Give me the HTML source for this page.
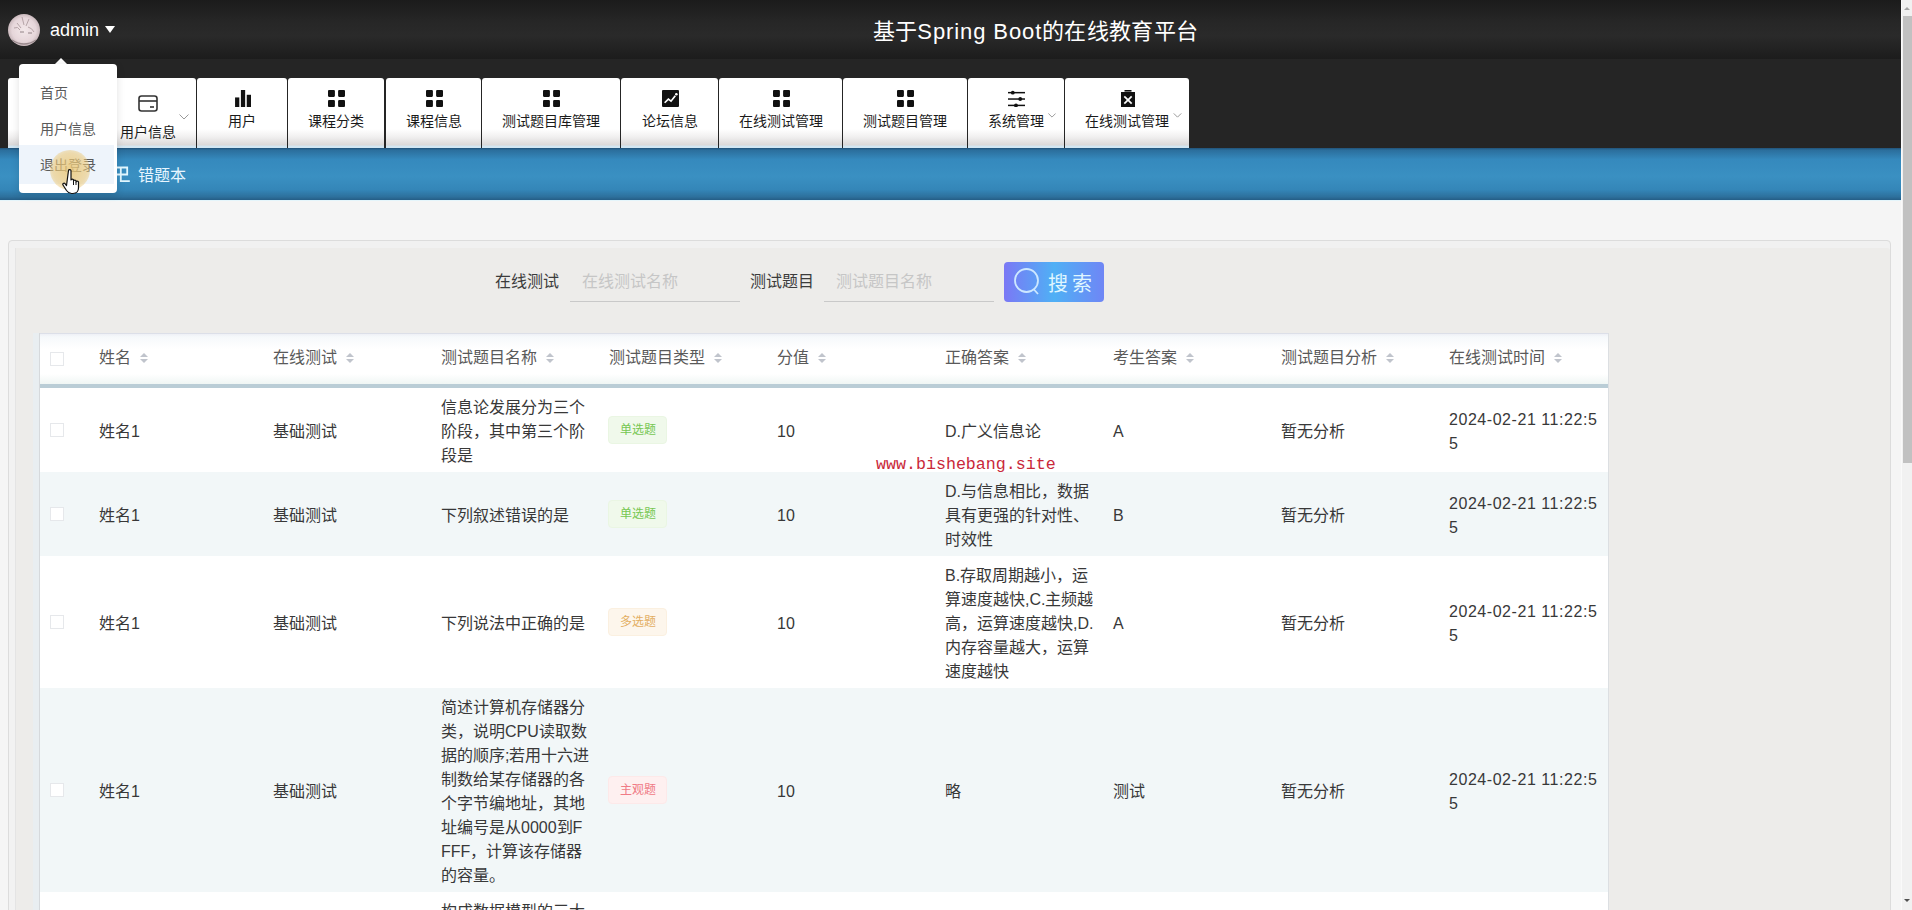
<!DOCTYPE html>
<html lang="zh-CN"><head><meta charset="utf-8">
<style>
*{box-sizing:border-box;margin:0;padding:0}
html,body{width:1912px;height:910px;overflow:hidden}
body{background:#f5f5f5;font-family:"Liberation Sans",sans-serif;position:relative;color:#333}
.abs{position:absolute}
#topbar{left:0;top:0;width:1901px;height:59px;background:linear-gradient(#1b1b1b 0%,#262626 35%,#2a2a2a 60%,#1c1c1c 100%)}
#navbg{left:0;top:59px;width:1901px;height:89px;background:#252525}
#bluebar{left:0;top:148px;width:1901px;height:52px;background:linear-gradient(#215278 0%,#2b6e9c 4%,#3589bd 22%,#3a90c2 55%,#3486b8 80%,#2d709c 94%,#255d85 100%)}
#scroll{left:1901px;top:0;width:11px;height:910px;background:#f1f1f1;border-left:1px solid #fafafa}
#thumb{left:1903px;top:16px;width:9px;height:447px;background:#c1c1c1}
.tab{position:absolute;top:78px;height:70px;background:linear-gradient(#fff 0%,#fff 73%,#f1f0f0 84%,#dad8d8 96%,#d2e6f2 97%,#d2e6f2 100%);border-radius:3px 3px 0 0;text-align:center;color:#1a1a1a;font-size:14px}
.tab .ic{position:absolute;top:12px;left:50%;margin-left:-8px;width:17px;height:17px}
.tab .tx{position:absolute;top:35px;left:0;right:0;line-height:16px;white-space:nowrap}
.chev{position:absolute;width:10px;height:6px}
#title{left:0;width:1901px;top:17px;text-align:center;color:#fff;font-size:22px;letter-spacing:0.3px;line-height:30px;padding-left:170px}
#avatar{left:8px;top:14px;width:32px;height:32px;border-radius:50%;background:radial-gradient(circle at 45% 45%,#f3e6e9 0%,#e2cdd2 50%,#b9a2a8 100%)}
#admin{left:50px;top:19px;color:#fff;font-size:18px;line-height:22px}
#caret{left:105px;top:26px;width:0;height:0;border-left:5.5px solid transparent;border-right:5.5px solid transparent;border-top:7px solid #fff}
#crumb{left:138px;top:166px;color:#e8f6ff;font-size:16px;line-height:20px}
#box{left:8px;top:240px;width:1883px;height:700px;background:#edecea;border:1px solid #dcdcdc;border-radius:4px;box-shadow:inset 0 7px 0 #f1f1f1,inset 6px 0 0 #f2f2f2,inset 7px 0 0 #e4e4e4}
.lbl{position:absolute;top:272px;font-size:16px;line-height:20px;color:#3c3c3c}
.inp{position:absolute;top:262px;height:40px;border-bottom:1px solid #c9c9c9;color:#c6c6c6;font-size:16px;line-height:40px;padding-left:12px}
#sbtn{left:1004px;top:262px;width:100px;height:40px;border-radius:4px;background:linear-gradient(90deg,#7b78f5 0%,#4fb0f5 50%,#6f86f5 100%);color:#dff6ff;font-size:20px;line-height:40px}
#table{left:40px;top:333px;width:1568px;height:620px;background:#fff;box-shadow:1px 0 0 #dcdfe2,-1px 0 0 #d6d9dc,-7px 0 0 #e9eef1}
#thead{left:0;top:0;width:1568px;height:55px;background:linear-gradient(#eef0f6 0px,#f6f9fb 3px,#fff 15px,#fff 40px,#eef5f3 51px);border-top:1px solid #dcdfe8;border-bottom:4px solid #bacdd6}
.th{position:absolute;top:14px;font-size:16px;line-height:20px;color:#5a5a5a;white-space:nowrap}
.sort{display:inline-block;width:8px;height:11px;margin-left:9px;vertical-align:-1px;position:relative}
.sort:before{content:"";position:absolute;left:0;top:0;border-left:4px solid transparent;border-right:4px solid transparent;border-bottom:4px solid #c0c4cc}
.sort:after{content:"";position:absolute;left:0;top:6px;border-left:4px solid transparent;border-right:4px solid transparent;border-top:4px solid #c0c4cc}
.row{position:absolute;left:0;width:1568px}
.cb{border-color:#e6e8eb!important;border-radius:0!important}
.cell{position:absolute;font-size:16px;line-height:24px;color:#383838;white-space:nowrap;margin-top:1.5px}
.cb{position:absolute;left:10px;width:14px;height:14px;border:1px solid #dcdfe6;border-radius:2px;background:#fff}
.tag{position:absolute;left:568px;width:59px;height:28px;border-radius:4px;font-size:12px;line-height:26px;text-align:center;border:1px solid}
.green{background:#f0f9eb;border-color:#eaf6e3;color:#76c752}
.orange{background:#fdf6ec;border-color:#fbf0e0;color:#e3ae62}
.red{background:#fef0f0;border-color:#fde9e9;color:#f07b86}
#dd{left:19px;top:64px;width:98px;height:129px;background:#fff;border-radius:4px;box-shadow:0 2px 8px rgba(0,0,0,.12)}
#dd .it{position:absolute;left:21px;margin-top:1px;font-size:14px;line-height:18px;color:#5a5a5a}
#ddarr{left:55px;top:58px;width:0;height:0;border-left:6px solid transparent;border-right:6px solid transparent;border-bottom:6px solid #fff}
#wm{left:876px;top:455px;font-family:"Liberation Mono",monospace;font-size:16.65px;line-height:20px;color:#c9283a}
</style></head><body>
<div id="topbar" class="abs"></div>
<div id="navbg" class="abs"></div>
<div id="bluebar" class="abs"></div>
<div class="abs" style="left:0;top:200px;width:1901px;height:1px;background:#e4f5fb"></div>
<div id="scroll" class="abs"></div>
<div id="thumb" class="abs"></div>
<div class="abs" style="left:1904px;top:7px;width:0;height:0;border-left:3.5px solid transparent;border-right:3.5px solid transparent;border-bottom:3.5px solid #a3a3a3"></div>
<div class="abs" style="left:1904px;top:899px;width:0;height:0;border-left:3.5px solid transparent;border-right:3.5px solid transparent;border-top:3.5px solid #505050"></div>
<div id="title" class="abs">基于<span style="letter-spacing:0.9px">Spring Boot</span>的在线教育平台</div>
<svg class="abs" style="left:8px;top:14px" width="32" height="32" viewBox="0 0 32 32"><defs><radialGradient id="ag" cx="50%" cy="50%" r="50%"><stop offset="0" stop-color="#f3e8ea"/><stop offset="0.75" stop-color="#e6d6da"/><stop offset="1" stop-color="#c9b8bc"/></radialGradient><clipPath id="ac"><circle cx="16" cy="16" r="16"/></clipPath></defs><circle cx="16" cy="16" r="16" fill="url(#ag)"/><g clip-path="url(#ac)" fill="none" stroke="#a89599" stroke-width="1" opacity=".8"><path d="M14 3 L16 11 M21 5 L18 12 M9 9 L13 14 M6 14 Q10 12 12 16 M20 13 Q24 14 26 18"/><path d="M12 18 H16 M20 19 H24" stroke="#7d6d71"/><path d="M4 26 Q16 34 28 26" stroke="#8a7a7e" stroke-width="1.5"/></g></svg>
<div id="admin" class="abs">admin</div>
<div id="caret" class="abs"></div>

<!-- tabs -->
<div class="tab" style="left:8px;width:188px">
  <svg class="ic" style="left:130px;margin-left:0;top:17px;width:20px;height:17px" viewBox="0 0 20 17"><rect x="1" y="1" width="18" height="15" rx="2.5" fill="none" stroke="#333" stroke-width="1.6"/><line x1="1" y1="6" x2="19" y2="6" stroke="#333" stroke-width="1.6"/><line x1="12" y1="12" x2="16" y2="12" stroke="#333" stroke-width="1.6"/></svg>
  <div class="tx" style="left:112px;right:auto;top:46px">用户信息</div>
  <svg class="chev" style="left:171px;top:36px" viewBox="0 0 10 6"><polyline points="0.5,0.5 5,5 9.5,0.5" fill="none" stroke="#999" stroke-width="1"/></svg>
</div>
<div class="tab" style="left:197px;width:90px">
  <svg class="ic" viewBox="0 0 16 16" style="top:12px"><rect x="1" y="7" width="4" height="9" fill="#111"/><rect x="6.5" y="0" width="4" height="16" fill="#111"/><rect x="12" y="4.5" width="4" height="11.5" fill="#111"/></svg>
  <div class="tx">用户</div>
</div>
<div class="tab" style="left:288px;width:96px">
  <svg class="ic" viewBox="0 0 16 16"><rect x="0" y="0" width="6.5" height="6.5" rx="1" fill="#111"/><rect x="9.5" y="0" width="6.5" height="6.5" rx="1" fill="#111"/><rect x="0" y="9.5" width="6.5" height="6.5" rx="1" fill="#111"/><rect x="9.5" y="9.5" width="6.5" height="6.5" rx="1" fill="#111"/></svg>
  <div class="tx">课程分类</div>
</div>
<div class="tab" style="left:386px;width:95px">
  <svg class="ic" viewBox="0 0 16 16"><rect x="0" y="0" width="6.5" height="6.5" rx="1" fill="#111"/><rect x="9.5" y="0" width="6.5" height="6.5" rx="1" fill="#111"/><rect x="0" y="9.5" width="6.5" height="6.5" rx="1" fill="#111"/><rect x="9.5" y="9.5" width="6.5" height="6.5" rx="1" fill="#111"/></svg>
  <div class="tx">课程信息</div>
</div>
<div class="tab" style="left:482px;width:138px">
  <svg class="ic" viewBox="0 0 16 16"><rect x="0" y="0" width="6.5" height="6.5" rx="1" fill="#111"/><rect x="9.5" y="0" width="6.5" height="6.5" rx="1" fill="#111"/><rect x="0" y="9.5" width="6.5" height="6.5" rx="1" fill="#111"/><rect x="9.5" y="9.5" width="6.5" height="6.5" rx="1" fill="#111"/></svg>
  <div class="tx">测试题目库管理</div>
</div>
<div class="tab" style="left:621px;width:97px">
  <svg class="ic" viewBox="0 0 16 16"><rect x="0" y="0" width="16" height="16" rx="1" fill="#111"/><polyline points="2.5,12 6,8.5 8.5,10.5 12.5,5.5" fill="none" stroke="#fff" stroke-width="1.6"/><circle cx="13.5" cy="4" r="1.2" fill="#fff"/></svg>
  <div class="tx">论坛信息</div>
</div>
<div class="tab" style="left:719px;width:123px">
  <svg class="ic" viewBox="0 0 16 16"><rect x="0" y="0" width="6.5" height="6.5" rx="1" fill="#111"/><rect x="9.5" y="0" width="6.5" height="6.5" rx="1" fill="#111"/><rect x="0" y="9.5" width="6.5" height="6.5" rx="1" fill="#111"/><rect x="9.5" y="9.5" width="6.5" height="6.5" rx="1" fill="#111"/></svg>
  <div class="tx">在线测试管理</div>
</div>
<div class="tab" style="left:843px;width:124px">
  <svg class="ic" viewBox="0 0 16 16"><rect x="0" y="0" width="6.5" height="6.5" rx="1" fill="#111"/><rect x="9.5" y="0" width="6.5" height="6.5" rx="1" fill="#111"/><rect x="0" y="9.5" width="6.5" height="6.5" rx="1" fill="#111"/><rect x="9.5" y="9.5" width="6.5" height="6.5" rx="1" fill="#111"/></svg>
  <div class="tx">测试题目管理</div>
</div>
<div class="tab" style="left:968px;width:96px">
  <svg class="ic" viewBox="0 0 16 16" style="left:40px;margin-left:0"><line x1="0" y1="2.5" x2="16" y2="2.5" stroke="#111" stroke-width="1.4"/><line x1="0" y1="8.5" x2="16" y2="8.5" stroke="#111" stroke-width="1.4"/><line x1="0" y1="14.5" x2="16" y2="14.5" stroke="#111" stroke-width="1.4"/><circle cx="4.5" cy="2.5" r="1.8" fill="#111"/><circle cx="11.5" cy="8.5" r="1.8" fill="#111"/><circle cx="7.5" cy="14.5" r="1.8" fill="#111"/></svg>
  <div class="tx" style="left:20px;right:auto">系统管理</div>
  <svg class="chev" style="left:80px;top:35px;width:8px;height:5px" viewBox="0 0 10 6"><polyline points="0.5,0.5 5,5 9.5,0.5" fill="none" stroke="#999" stroke-width="1.2"/></svg>
</div>
<div class="tab" style="left:1065px;width:124px">
  <svg class="ic" viewBox="0 0 16 17" style="left:55px;margin-left:0;width:16px;height:17px;top:12px"><rect x="1" y="2" width="14" height="15" fill="#111"/><rect x="4.5" y="0" width="7" height="1.6" fill="#111"/><line x1="4.3" y1="6.3" x2="11.7" y2="13.7" stroke="#fff" stroke-width="1.7"/><line x1="11.7" y1="6.3" x2="4.3" y2="13.7" stroke="#fff" stroke-width="1.7"/></svg>
  <div class="tx" style="left:20px;right:auto">在线测试管理</div>
  <svg class="chev" style="left:108px;top:35px;width:9px;height:5px" viewBox="0 0 10 6"><polyline points="0.5,0.5 5,5 9.5,0.5" fill="none" stroke="#999" stroke-width="1.2"/></svg>
</div>

<div id="crumb" class="abs">错题本</div>
<svg class="abs" style="left:110px;top:160px" width="24" height="26" viewBox="110 160 24 26"><path d="M112 167.5 H127.2 V174.5 H112 M120.8 167 V181.2 H129.8" fill="none" stroke="#e2f8ff" stroke-width="1.8"/></svg>

<div id="box" class="abs"></div>
<div class="lbl" style="left:495px">在线测试</div>
<div class="inp" style="left:570px;width:170px">在线测试名称</div>
<div class="lbl" style="left:750px">测试题目</div>
<div class="inp" style="left:824px;width:170px">测试题目名称</div>
<div id="sbtn" class="abs">
  <svg style="position:absolute;left:8px;top:5px" width="30" height="30" viewBox="0 0 30 30"><circle cx="14.5" cy="13.5" r="11.5" fill="none" stroke="#cde8ff" stroke-width="1.8"/><line x1="21.5" y1="22" x2="26" y2="27" stroke="#cde8ff" stroke-width="1.8"/></svg>
  <span style="position:absolute;left:44px;top:2px;letter-spacing:4px">搜索</span>
</div>

<div id="table" class="abs">
  <div id="thead" class="abs">
    <div class="cb" style="top:18px;border-color:#e4e7ed"></div>
    <div class="th" style="left:59px">姓名<i class="sort"></i></div>
    <div class="th" style="left:233px">在线测试<i class="sort"></i></div>
    <div class="th" style="left:401px">测试题目名称<i class="sort"></i></div>
    <div class="th" style="left:569px">测试题目类型<i class="sort"></i></div>
    <div class="th" style="left:737px">分值<i class="sort"></i></div>
    <div class="th" style="left:905px">正确答案<i class="sort"></i></div>
    <div class="th" style="left:1073px">考生答案<i class="sort"></i></div>
    <div class="th" style="left:1241px">测试题目分析<i class="sort"></i></div>
    <div class="th" style="left:1409px">在线测试时间<i class="sort"></i></div>
  </div>
  <!-- row1 -->
  <div class="row" style="top:55px;height:84px;background:#fff">
    <div class="cb" style="top:35px"></div>
    <div class="cell" style="left:59px;top:30px">姓名1</div>
    <div class="cell" style="left:233px;top:30px">基础测试</div>
    <div class="cell" style="left:401px;top:6px">信息论发展分为三个<br>阶段，其中第三个阶<br>段是</div>
    <div class="tag green" style="top:28px">单选题</div>
    <div class="cell" style="left:737px;top:30px">10</div>
    <div class="cell" style="left:905px;top:30px">D.广义信息论</div>
    <div class="cell" style="left:1073px;top:30px">A</div>
    <div class="cell" style="left:1241px;top:30px">暂无分析</div>
    <div class="cell" style="left:1409px;top:18px"><span style="letter-spacing:0.55px">2024-02-21 11:22:5</span><br>5</div>
  </div>
  <!-- row2 -->
  <div class="row" style="top:139px;height:84px;background:#f2f7f8">
    <div class="cb" style="top:35px"></div>
    <div class="cell" style="left:59px;top:30px">姓名1</div>
    <div class="cell" style="left:233px;top:30px">基础测试</div>
    <div class="cell" style="left:401px;top:30px">下列叙述错误的是</div>
    <div class="tag green" style="top:28px">单选题</div>
    <div class="cell" style="left:737px;top:30px">10</div>
    <div class="cell" style="left:905px;top:6px">D.与信息相比，数据<br>具有更强的针对性、<br>时效性</div>
    <div class="cell" style="left:1073px;top:30px">B</div>
    <div class="cell" style="left:1241px;top:30px">暂无分析</div>
    <div class="cell" style="left:1409px;top:18px"><span style="letter-spacing:0.55px">2024-02-21 11:22:5</span><br>5</div>
  </div>
  <!-- row3 -->
  <div class="row" style="top:223px;height:132px;background:#fff">
    <div class="cb" style="top:59px"></div>
    <div class="cell" style="left:59px;top:54px">姓名1</div>
    <div class="cell" style="left:233px;top:54px">基础测试</div>
    <div class="cell" style="left:401px;top:54px">下列说法中正确的是</div>
    <div class="tag orange" style="top:52px">多选题</div>
    <div class="cell" style="left:737px;top:54px">10</div>
    <div class="cell" style="left:905px;top:6px">B.存取周期越小，运<br>算速度越快,C.主频越<br>高，运算速度越快,D.<br>内存容量越大，运算<br>速度越快</div>
    <div class="cell" style="left:1073px;top:54px">A</div>
    <div class="cell" style="left:1241px;top:54px">暂无分析</div>
    <div class="cell" style="left:1409px;top:42px"><span style="letter-spacing:0.55px">2024-02-21 11:22:5</span><br>5</div>
  </div>
  <!-- row4 -->
  <div class="row" style="top:355px;height:204px;background:#f2f7f8">
    <div class="cb" style="top:95px"></div>
    <div class="cell" style="left:59px;top:90px">姓名1</div>
    <div class="cell" style="left:233px;top:90px">基础测试</div>
    <div class="cell" style="left:401px;top:6px">简述计算机存储器分<br>类，说明CPU读取数<br>据的顺序;若用十六进<br>制数给某存储器的各<br>个字节编地址，其地<br>址编号是从0000到F<br>FFF，计算该存储器<br>的容量。</div>
    <div class="tag red" style="top:88px">主观题</div>
    <div class="cell" style="left:737px;top:90px">10</div>
    <div class="cell" style="left:905px;top:90px">略</div>
    <div class="cell" style="left:1073px;top:90px">测试</div>
    <div class="cell" style="left:1241px;top:90px">暂无分析</div>
    <div class="cell" style="left:1409px;top:78px"><span style="letter-spacing:0.55px">2024-02-21 11:22:5</span><br>5</div>
  </div>
  <!-- row5 -->
  <div class="row" style="top:559px;height:100px;background:#fff">
    <div class="cell" style="left:401px;top:6px">构成数据模型的三大</div>
  </div>
</div>

<div id="wm" class="abs">www.bishebang.site</div>

<!-- dropdown -->
<div id="ddarr" class="abs"></div>
<div id="dd" class="abs">
  <div class="it" style="top:19px">首页</div>
  <div class="it" style="top:55px">用户信息</div>
  <div style="position:absolute;left:0;top:81px;width:95px;height:39px;background:#eef4fb"></div>
  <div class="it" style="top:91px">退出登录</div>
</div>
<div class="abs" style="left:50px;top:150px;width:40px;height:40px;border-radius:50%;background:radial-gradient(circle,rgba(235,200,120,.85) 0%,rgba(235,200,120,.6) 60%,rgba(235,200,120,0) 100%)"></div>
<svg class="abs" style="left:62px;top:168px" width="24" height="28" viewBox="0 0 22 28"><path d="M5.5 2.5c0-1.2 2.5-1.2 2.5 0v9.5c0-1.2 2.5-1.2 2.5 0v1c0-1.2 2.5-1.2 2.5 0v1c0-1.2 2.5-1.2 2.5 0v6c0 3-2 5.5-5.5 5.5h-1.5c-2.5 0-3.8-1.3-5-3l-3.5-5.5c-.8-1.3 1-2.4 2-1.3l1.5 1.8z" fill="#fff" stroke="#111" stroke-width="1.2" stroke-linejoin="round"/><path d="M10.5 13v4M13 14v3M15.5 15v2" stroke="#111" stroke-width="1"/></svg>
</body></html>
